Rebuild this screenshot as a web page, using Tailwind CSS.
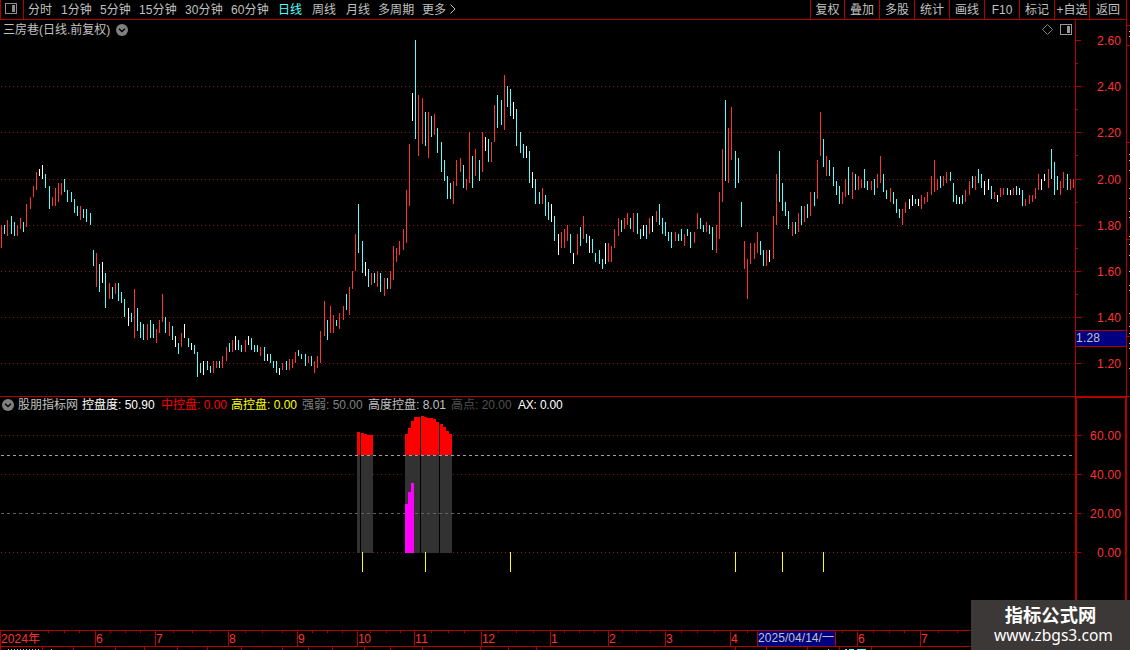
<!DOCTYPE html>
<html lang="zh-CN">
<head>
    <meta charset="UTF-8">
    <meta name="viewport" content="width=device-width, initial-scale=1.0">
    <title>三房巷 日线</title>
    <script src="https://cdn.jsdelivr.net/npm/@tailwindcss/browser@4"></script>
</head>
<body class="w-[1130px] h-[650px] overflow-hidden bg-black text-[12px] leading-[18px] text-[#c0c0c0] font-['Liberation_Sans','Noto_Sans_CJK_SC',sans-serif]">
    <div class="relative flex flex-col w-[1130px] h-[650px] overflow-hidden">

        <!-- Toolbar -->
        <header class="flex justify-between h-[20px] w-[1127px] border-b border-r border-[#b40000] whitespace-nowrap">
            <div class="flex">
                <div class="w-6 h-[19px] border-l border-r border-[#b40000] pl-1 pt-[3px]">
                    <svg width="12" height="11" viewBox="0 0 12 11" shape-rendering="crispEdges">
                        <rect x="0.5" y="0.5" width="11" height="10" rx="1" fill="none" stroke="#8c8c8c"/>
                        <rect x="7" y="2" width="3" height="7" fill="#8c8c8c"/>
                    </svg>
                </div>
                <nav class="flex pl-1 pt-px tracking-[0.1px]">
                    <a class="w-[33px]">分时</a>
                    <a class="w-[39px]">1分钟</a>
                    <a class="w-[39px]">5分钟</a>
                    <a class="w-[46px]">15分钟</a>
                    <a class="w-[46px]">30分钟</a>
                    <a class="w-[47px]">60分钟</a>
                    <a class="w-[34px] text-[#54ffff]">日线</a>
                    <a class="w-[34px]">周线</a>
                    <a class="w-[32px]">月线</a>
                    <a class="w-[44px]">多周期</a>
                    <a class="w-[28px]">更多</a>
                    <svg class="mt-[3px]" width="6" height="10" viewBox="0 0 6 10"><path d="M0.5 0.5L5 5L0.5 9.5" fill="none" stroke="#c0c0c0"/></svg>
                </nav>
            </div>
            <div class="flex text-center leading-[20px]">
                <a class="w-[34px] border-l border-[#b40000]">复权</a>
                <a class="w-[35px] border-l border-[#b40000]">叠加</a>
                <a class="w-[35px] border-l border-[#b40000]">多股</a>
                <a class="w-[35px] border-l border-[#b40000]">统计</a>
                <a class="w-[35px] border-l border-[#b40000]">画线</a>
                <a class="w-[35px] border-l border-[#b40000]">F10</a>
                <a class="w-[35px] border-l border-[#b40000]">标记</a>
                <a class="w-[35px] border-l border-[#b40000]">+自选</a>
                <a class="w-[37px] border-l border-[#b40000]">返回</a>
            </div>
        </header>

        <!-- Price panel -->
        <section class="relative h-[376px]">
            <svg id="price" class="absolute inset-0" width="1130" height="376" viewBox="0 20 1130 376" shape-rendering="crispEdges"></svg>
            <div class="relative flex items-center h-[19px] pl-[3px]">
                <span class="w-[113px]">三房巷(日线.前复权)</span>
                <svg width="12" height="12" viewBox="0 0 12 12"><circle cx="6" cy="6" r="6" fill="#808080"/><path d="M3 4.8L6 7.6L9 4.8" fill="none" stroke="#000" stroke-width="1.4"/></svg>
                <svg class="ml-[914px]" width="11" height="11" viewBox="0 0 11 11"><path d="M5.5 0.5L10.5 5.5L5.5 10.5L0.5 5.5Z" fill="none" stroke="#808080"/></svg>
                <svg class="ml-[7px]" width="12" height="11" viewBox="0 0 12 11" shape-rendering="crispEdges"><rect x="0.5" y="0.5" width="11" height="10" rx="1" fill="none" stroke="#9a9a9a"/><rect x="7" y="2" width="3" height="7" fill="#9a9a9a"/></svg>
            </div>
        </section>

        <!-- Indicator panel -->
        <section class="relative h-[234px] border-t border-[#b40000]">
            <svg id="indicator" class="absolute inset-0" width="1130" height="233" viewBox="0 397 1130 233" shape-rendering="crispEdges"></svg>
            <div class="relative flex items-center h-[16px] pl-[2px] whitespace-nowrap">
                <svg class="mr-[4px]" width="12" height="12" viewBox="0 0 12 12"><circle cx="6" cy="6" r="6" fill="#808080"/><path d="M3 4.8L6 7.6L9 4.8" fill="none" stroke="#000" stroke-width="1.4"/></svg>
                <span class="w-[64px]">股朋指标网</span>
                <span class="w-[79px] text-white">控盘度: 50.90</span>
                <span class="w-[70px] text-[#ff0000]">中控盘: 0.00</span>
                <span class="w-[71px] text-[#ffff00]">高控盘: 0.00</span>
                <span class="w-[66px] text-[#808080]">强弱: 50.00</span>
                <span class="w-[83px]">高度控盘: 8.01</span>
                <span class="w-[67px] text-[#505050]">高点: 20.00</span>
                <span class="text-white tracking-[-0.2px]">AX: 0.00</span>
            </div>
        </section>

        <!-- Time axis -->
        <footer class="h-[20px]">
            <svg id="dates" width="1130" height="20" viewBox="0 630 1130 20" shape-rendering="crispEdges"></svg>
        </footer>

        <!-- Watermark -->
        <div class="absolute left-[971px] top-[600px] w-[159px] h-[50px] bg-[#3c3837] text-white text-center">
            <div class="pt-[3px] text-[18.3px] leading-[23px] font-bold font-['Noto_Sans_CJK_SC',sans-serif]">指标公式网</div>
            <div class="pl-[6px] text-[15.6px] leading-[18px] font-['Noto_Sans',sans-serif]">www.zbgs3.com</div>
        </div>
    </div>

    <script>
    const NS = 'http://www.w3.org/2000/svg';
    const RED = '#b40000';
    const price = document.getElementById('price');
    const indicator = document.getElementById('indicator');
    const dates = document.getElementById('dates');

    function rect(svg, x, y, w, h, fill) {
        const el = document.createElementNS(NS, 'rect');
        el.setAttribute('x', x);
        el.setAttribute('y', y);
        el.setAttribute('width', w);
        el.setAttribute('height', h);
        el.setAttribute('fill', fill);
        svg.appendChild(el);
    }

    function label(svg, x, y, text, fill, size, width) {
        const el = document.createElementNS(NS, 'text');
        el.setAttribute('x', x);
        el.setAttribute('y', y);
        el.setAttribute('fill', fill);
        el.setAttribute('font-size', size);
        if (width) {
            el.setAttribute('textLength', width);
        }
        el.textContent = text;
        svg.appendChild(el);
    }

    // Horizontal row of dashes
    function dashes(svg, x1, x2, y, on, step, fill) {
        for (let x = x1; x < x2; x += step) {
            rect(svg, x, y, on, 1, fill);
        }
    }

    // x, high, low, colour
    const bars = `
        1 225 248 r,4 225 234 c,7 220 236 r,11 216 234 c,14 222 236 c,17 225 236 r,20 218 229 r,23 222 232 c,26 204 227 r,
        30 197 209 r,33 186 197 r,36 172 190 r,39 169 176 w,42 165 179 w,45 174 188 c,49 186 209 c,52 197 206 r,55 188 206 r,
        58 183 202 r,61 183 195 r,64 179 192 c,67 190 202 c,71 192 202 c,74 199 213 c,77 206 216 c,80 206 220 r,83 209 218 c,
        86 209 222 c,90 213 225 c,93 250 266 c,96 253 287 r,99 264 292 c,102 262 283 w,105 273 308 c,109 283 299 r,112 287 299 c,
        115 283 294 r,118 283 301 c,121 292 303 c,124 299 317 c,128 308 326 w,131 313 322 c,134 289 338 r,137 308 331 c,
        140 322 338 c,143 324 340 c,147 324 340 r,150 320 338 c,153 324 338 c,156 329 343 r,159 320 333 r,162 294 322 r,
        165 317 333 c,169 322 336 r,172 326 340 c,175 336 347 w,178 343 354 c,181 333 347 r,184 324 338 w,188 338 347 c,
        191 343 350 w,194 345 354 c,197 352 377 c,200 363 373 c,203 361 375 w,207 361 370 c,210 366 373 c,213 361 373 r,
        216 361 368 r,219 361 368 c,222 356 368 r,226 347 361 r,229 343 352 c,232 340 352 r,235 336 350 w,238 340 350 c,
        241 345 352 c,245 340 352 r,248 336 345 w,251 338 350 c,254 345 352 c,257 345 352 c,260 347 356 r,264 347 361 c,
        267 354 361 w,270 354 363 c,273 361 368 c,276 361 373 c,279 368 375 w,282 363 370 r,286 361 370 c,289 359 370 r,
        292 359 368 r,295 352 363 r,298 350 356 c,301 354 359 c,305 354 366 c,308 356 363 r,311 356 366 c,314 361 373 r,
        317 356 368 r,320 331 363 r,324 301 336 r,327 320 340 c,330 306 333 r,333 315 333 r,336 320 326 c,339 313 329 r,
        343 306 320 r,346 294 310 c,349 287 315 r,352 271 289 r,355 234 271 r,358 204 253 c,362 241 273 c,365 262 276 w,
        368 269 287 c,371 273 285 r,374 273 283 c,377 271 287 r,380 273 292 c,384 278 296 r,387 278 289 c,390 271 289 r,
        393 246 280 r,396 248 262 r,399 241 255 r,403 229 250 r,406 190 243 r,409 144 206 r,412 93 121 w,415 40 139 c,
        418 95 156 r,422 98 144 r,425 112 146 c,428 112 158 r,431 116 137 c,434 114 135 r,437 128 153 c,441 142 172 c,
        444 160 181 c,447 176 199 c,450 183 199 c,453 181 204 r,456 160 186 r,460 158 172 r,463 165 188 c,466 179 190 r,
        469 132 183 r,472 156 188 c,475 149 176 r,479 160 181 c,482 132 172 r,485 137 151 w,488 139 162 c,491 142 162 r,
        494 105 142 r,497 95 128 c,501 100 125 c,504 75 130 r,507 86 107 c,510 89 116 c,513 102 119 w,516 109 146 c,
        520 132 153 c,523 144 158 c,526 146 158 w,529 151 183 c,532 172 188 w,535 179 204 c,539 192 204 c,542 188 204 r,
        545 195 216 c,548 202 220 c,551 204 222 w,554 216 241 c,558 234 255 w,561 232 248 r,564 229 248 r,567 225 241 r,
        570 234 253 c,573 253 264 w,577 234 255 r,580 227 246 c,583 216 239 r,586 234 243 c,589 236 253 w,592 239 253 c,
        595 253 262 c,599 250 264 c,602 259 269 c,605 243 264 w,608 243 262 r,611 246 262 r,614 229 248 r,618 218 236 r,
        621 220 232 c,624 218 229 r,627 213 225 r,630 218 229 c,633 213 232 r,637 213 234 c,640 229 239 c,643 225 236 w,
        646 225 239 c,649 218 234 r,652 216 232 w,656 211 222 r,659 204 225 c,662 218 234 c,665 222 236 c,668 232 241 c,
        671 232 248 c,675 232 241 r,678 234 241 c,681 229 241 c,684 234 246 r,687 229 236 c,690 232 248 c,694 232 243 r,
        697 213 229 r,700 218 229 c,703 225 232 c,706 222 232 r,709 225 234 c,712 227 250 c,716 225 253 r,719 192 239 r,
        722 149 202 r,725 100 181 c,728 128 183 r,731 107 160 r,735 151 188 c,738 158 183 c,741 202 227 c,744 241 269 r,
        747 259 299 r,750 243 264 r,754 243 259 r,757 232 253 r,760 241 255 c,763 250 266 c,766 250 266 r,769 250 262 w,
        773 216 259 r,776 174 225 r,779 151 202 c,782 183 211 c,785 202 216 c,788 211 229 c,792 222 236 r,795 222 234 c,
        798 213 232 r,801 206 225 c,804 206 222 r,807 204 218 c,810 192 216 r,814 192 206 c,817 160 199 r,820 112 156 r,
        823 139 167 c,826 156 176 r,829 160 176 c,833 167 186 c,836 181 195 c,839 186 204 c,842 192 204 r,845 179 197 r,
        848 167 195 c,852 172 199 r,855 174 190 c,858 176 190 r,861 179 188 r,864 169 188 c,867 181 190 c,871 181 190 r,
        874 179 195 c,877 174 188 r,880 156 183 r,883 174 192 c,886 190 199 c,890 188 202 r,893 192 204 c,896 199 213 c,
        899 209 218 c,902 209 225 r,905 202 213 r,909 199 209 w,912 195 206 w,915 199 204 c,918 199 206 w,921 195 209 r,
        924 197 204 r,927 192 202 r,931 176 195 r,934 160 192 r,937 179 190 r,940 176 188 c,943 176 186 r,946 172 183 r,
        950 172 181 c,953 183 202 c,956 195 204 c,959 197 204 w,962 195 204 c,965 190 202 r,969 181 195 r,972 176 188 c,
        975 176 190 r,978 169 183 c,981 174 188 c,984 181 195 w,988 179 190 w,991 186 199 c,994 192 199 r,997 195 202 w,
        1000 188 197 r,1003 188 195 r,1007 188 195 c,1010 190 195 w,1013 188 195 r,1016 186 195 c,1019 188 195 w,
        1022 190 206 c,1025 199 206 r,1029 195 204 r,1032 195 202 r,1035 188 199 r,1038 174 190 r,1041 179 190 w,
        1044 174 181 w,1048 169 188 r,1051 149 179 c,1054 162 195 c,1057 176 190 c,1060 181 195 r,1063 172 188 r,
        1067 174 190 c,1070 179 190 r,1073 179 188 r`;
    const colors = { r: '#ff3232', c: '#54ffff', w: '#ffffff' };

    // Price grid, axis and bars
    const levels = [[40, '2.60'], [86, '2.40'], [132, '2.20'], [179, '2.00'], [225, '1.80'], [271, '1.60'], [317, '1.40'], [363, '1.20']];
    levels.forEach(([y, text]) => {
        if (y > 40) {
            dashes(price, 1, 1075, y, 1, 4, '#8c1414');
        }
        rect(price, 1076, y, 5, 1, RED);
        if (y < 363) {
            rect(price, 1076, y + 23, 2, 1, RED);
        }
        label(price, 1097, y + 5, text, '#ff3232', 12, 24);
    });
    bars.split(',').forEach(item => {
        const [x, high, low, c] = item.trim().split(' ');
        rect(price, x, high, 1, low - high, colors[c]);
    });
    rect(price, 1075, 20, 1, 376, RED);
    rect(price, 1126, 20, 1, 376, RED);
    rect(price, 1076, 330, 50, 17, RED);
    rect(price, 1076, 331, 50, 15, '#000080');
    label(price, 1076, 342, '1.28', '#c0c0c0', 12, 24);
    [25, 45, 142, 239, 336].forEach(y => rect(price, 1127, y, 3, 1, RED));
    [31, 36, 154, 160, 170, 188, 198, 211, 217, 236, 244, 255, 271, 285, 290, 313, 326, 333, 343, 348, 368].forEach(y => rect(price, 1129, y, 1, 1, '#c0c0c0'));

    // Indicator
    [[435, '60.00'], [474, '40.00'], [513, '20.00'], [552, '0.00']].forEach(([y, text]) => {
        if (y !== 513) {
            dashes(indicator, 1, 1075, y, 1, 4, '#8c1414');
        }
        rect(indicator, 1077, y, 4, 1, RED);
        label(indicator, text.length > 4 ? 1090 : 1097, y + 5, text, '#ff3232', 12, text.length > 4 ? 31 : 24);
    });
    const columns = [
        [357, 360, 432], [361, 364, 433], [364, 367, 434], [367, 373, 435],
        [405, 408, 434], [408, 411, 428], [411, 414, 421], [414, 420, 417], [421, 424, 416], [424, 427, 417],
        [427, 433, 418], [433, 436, 419], [436, 439, 422], [440, 443, 424], [443, 446, 427], [446, 449, 431], [449, 452, 434]
    ];
    columns.forEach(([x1, x2, top]) => {
        rect(indicator, x1, top, x2 - x1, 455 - top, '#ff0000');
        rect(indicator, x1, 455, x2 - x1, 98, '#323232');
    });
    dashes(indicator, 1, 1075, 455, 3, 6, '#a0a0a0');
    dashes(indicator, 1, 1075, 513, 3, 6, '#606060');
    [[405, 504], [408, 492], [411, 483]].forEach(([x, top]) => rect(indicator, x, top, 3, 553 - top, '#ff00ff'));
    [362, 425, 510, 735, 782, 823].forEach(x => rect(indicator, x, 552, 1, 20, '#ffff00'));
    rect(indicator, 1075, 397, 2, 233, RED);
    rect(indicator, 1125, 397, 2, 233, RED);
    rect(indicator, 1075, 397, 52, 1, RED);

    // Date axis
    rect(dates, 0, 630, 1130, 1, RED);
    rect(dates, 0, 646, 1130, 1, RED);
    rect(dates, 0, 630, 1, 17, RED);
    label(dates, 1, 643, '2024年', '#ff3232', 12, 39);
    [[95, '6'], [155, '7'], [228, '8'], [297, '9'], [357, '10'], [414, '11'], [481, '12'], [550, '1'], [608, '2'], [665, '3'], [730, '4'], [857, '6'], [920, '7']].forEach(([x, text]) => {
        rect(dates, x, 630, 1, 17, RED);
        label(dates, x + 1, 643, text, '#ff3232', 12, text.length > 1 ? 13 : 0);
    });
    [48, 64, 79, 110, 125, 140, 173, 192, 210, 245, 262, 282, 312, 327, 342, 370, 386, 400, 431, 448, 464, 498, 516, 533, 564, 579, 594, 622, 636, 650, 681, 697, 714, 747, 842, 873, 889, 904, 938, 957].forEach(x => rect(dates, x, 631, 1, 2, RED));
    rect(dates, 757, 630, 79, 17, RED);
    rect(dates, 758, 631, 77, 15, '#000080');
    label(dates, 758, 642, '2025/04/14/一', '#c0c0c0', 12, 76);

    // Tab row cut off by the window's bottom edge
    [0, 42, 73, 115, 144, 177, 207, 241, 282, 308, 332, 364, 390, 422, 480, 508, 536, 735, 766, 807, 839, 871].forEach(x => rect(dates, x, 647, 1, 3, RED));
    [8, 11, 14, 17, 20, 23, 26, 29, 32, 35, 38, 51, 828].forEach(x => rect(dates, x, 649, 1, 1, '#c0c0c0'));
    rect(dates, 845, 649, 2, 1, '#54ffff');
    rect(dates, 849, 649, 5, 1, '#54ffff');
    rect(dates, 857, 649, 9, 1, '#54ffff');
    </script>
</body>
</html>
